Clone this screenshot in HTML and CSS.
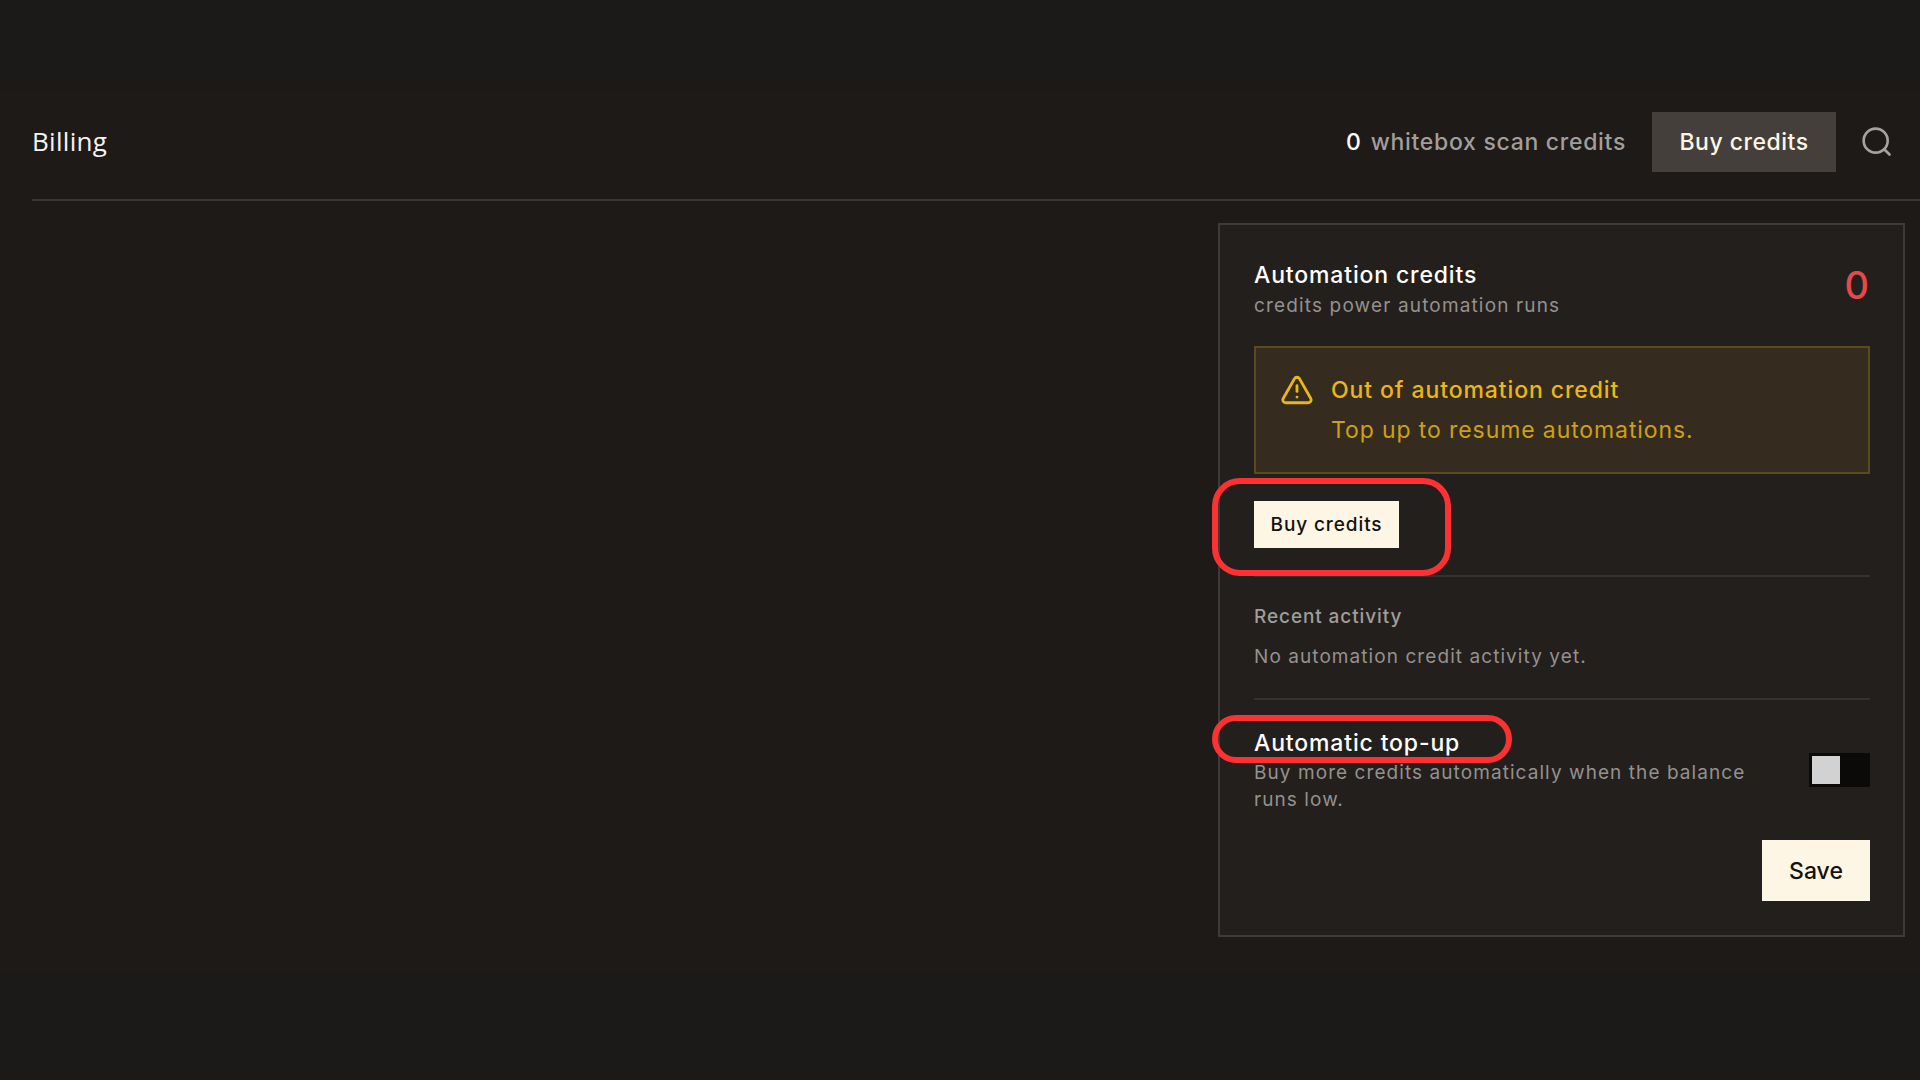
FILE: index.html
```html
<!DOCTYPE html>
<html lang="en">
<head>
    <meta charset="UTF-8">
    <meta name="viewport" content="width=device-width, initial-scale=1.0">
    <title>Billing</title>
    <link rel="stylesheet" href="styles.css">
</head>
<body>
    <div class="page">
        <header class="topbar">
            <h1>Billing</h1>
            <div class="topbar-right">
                <div class="scan-credits"><span class="scan-count">0</span><span class="scan-label">whitebox scan credits</span></div>
                <button class="btn-dark">Buy credits</button>
                <svg class="search" viewBox="0 0 24 24" fill="none" stroke="currentColor" stroke-width="2" stroke-linecap="round" stroke-linejoin="round"><circle cx="11" cy="11" r="9"/><path d="m21.4 21.4-4-4"/></svg>
            </div>
        </header>
        <section class="card">
            <div class="card-head">
                <div>
                    <h2>Automation credits</h2>
                    <p class="muted">credits power automation runs</p>
                </div>
                <span class="balance">0</span>
            </div>
            <div class="alert">
                <svg class="alert-icon" viewBox="0 0 24 24" fill="none" stroke="currentColor" stroke-width="2" stroke-linecap="round" stroke-linejoin="round"><path d="m21.73 18-8-14a2 2 0 0 0-3.48 0l-8 14A2 2 0 0 0 4 21h16a2 2 0 0 0 1.73-3"/><path d="M12 9v4"/><path d="M12 17h.01"/></svg>
                <div class="alert-text">
                    <strong>Out of automation credit</strong>
                    <span>Top up to resume automations.</span>
                </div>
            </div>
            <button class="btn-light btn-small">Buy credits</button>
            <div class="activity">
                <h3>Recent activity</h3>
                <p class="muted">No automation credit activity yet.</p>
            </div>
            <div class="topup">
                <div class="topup-text">
                    <h2>Automatic top-up</h2>
                    <p class="muted">Buy more credits automatically when the balance runs low.</p>
                </div>
                <div class="toggle"><div class="knob"></div></div>
            </div>
            <button class="btn-light btn-save">Save</button>
            <div class="mark mark-buy"></div>
            <div class="mark mark-topup"></div>
        </section>
    </div>
</body>
</html>
```
FILE: styles.css
```css
* { box-sizing: border-box; }
body { margin: 0; background: #1b1a18; font-family: Inter, 'Liberation Sans', sans-serif; color: #fff; }
h1, h2, h3, p { margin: 0; }

.page { height: 882px; margin: 90px 0 108px; background: #1e1a17; display: flex; flex-direction: column; }

.topbar { height: 111px; margin-left: 32px; padding: 0 27px 5px 0; border-bottom: 2px solid #3a3735; display: flex; justify-content: space-between; align-items: center; }
.topbar h1 { padding-bottom: 2px; font-family: 'Open Sans', sans-serif; font-size: 26px; font-weight: 400; line-height: 34px; letter-spacing: 0.3px; color: #f5f3f0; }
.topbar-right { display: flex; align-items: center; }
.scan-credits { display: flex; gap: 10px; margin-right: 26px; font-size: 23px; font-weight: 500; line-height: 30px; }
.scan-label { color: #a19e9b; letter-spacing: 0.7px; }
button { border: 0; padding: 0; font-family: inherit; font-weight: 500; display: flex; justify-content: center; align-items: center; }
.btn-dark { width: 184px; height: 60px; background: #443f3b; color: #fef6e4; font-size: 23px; letter-spacing: 0.5px; }
.search { width: 32px; height: 32px; margin-left: 25px; color: #a5a3a1; }

.card { position: relative; width: 687px; height: 714px; margin: 22px 15px 0 auto; padding: 34px 33px 34px 34px; background: #231f1c; border: 2px solid #3d3a38; }
.card h2 { font-size: 23px; font-weight: 500; line-height: 32px; letter-spacing: 0.85px; }
.card h3 { font-size: 19px; font-weight: 500; line-height: 27px; letter-spacing: 0.9px; color: #a09d9a; }
.muted { font-size: 19px; line-height: 27px; letter-spacing: 1.07px; color: #94918e; }
.card-head { display: flex; justify-content: space-between; align-items: flex-start; height: 60px; }
.card-head .muted { padding-top: 1px; letter-spacing: 1.15px; }
.balance { padding-right: 1px; font-size: 38px; font-weight: 500; line-height: 53px; color: #e5484d; }

.alert { display: flex; height: 128px; margin-top: 27px; padding: 26px; background: #352c1f; border: 2px solid #5c4a1b; color: #eab619; }
.alert-icon { width: 34px; height: 34px; margin: -1px 17px 0 -2px; }
.alert-text { display: flex; flex-direction: column; align-items: flex-start; gap: 8px; font-size: 23px; line-height: 32px; letter-spacing: 0.9px; }
.alert-text strong { font-weight: 500; }
.alert-text span { color: #cda01a; }

.btn-light { background: #fef6e4; color: #14110f; }
.btn-small { width: 145px; height: 47px; margin: 27px 0; padding-bottom: 1px; font-size: 19px; letter-spacing: 0.9px; }

.activity { height: 125px; padding-top: 26px; border-top: 2px solid #34312e; border-bottom: 2px solid #34312e; }
.activity p { margin-top: 13px; }

.topup { display: flex; justify-content: space-between; align-items: center; margin-top: 27px; }
.topup-text { width: 510px; }
.toggle { width: 61px; height: 34px; padding: 3px; background: #0b0a09; }
.knob { width: 28px; height: 28px; background: #d3d2d2; }
.btn-save { width: 108px; height: 61px; margin: 27px 0 0 auto; font-size: 23px; }

/* highlight outlines over the card */
.mark { position: absolute; border: 6px solid #fd3131; }
.mark-buy { left: -8px; top: 253px; width: 239px; height: 98px; border-radius: 28px; }
.mark-topup { left: -8px; top: 490px; width: 300px; height: 48px; border-radius: 24px; }
```
